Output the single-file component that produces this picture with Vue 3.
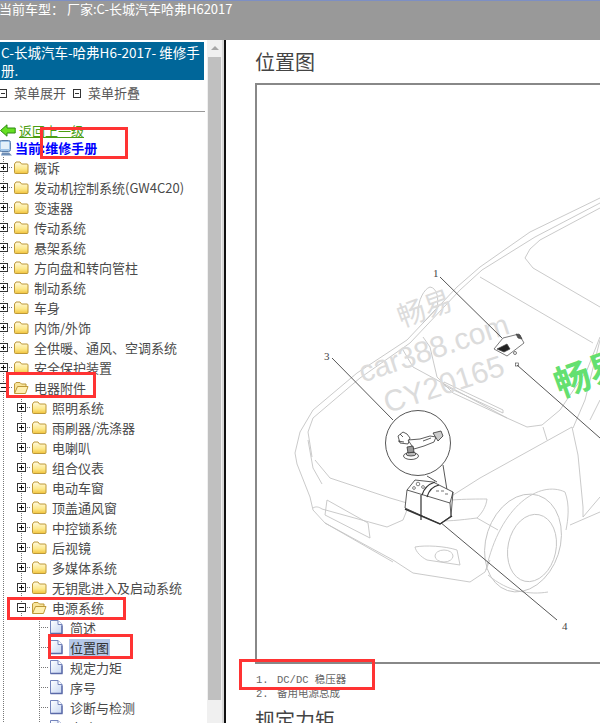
<script setup>
const topItems = [
  '概诉', '发动机控制系统(GW4C20)', '变速器', '传动系统', '悬架系统', '方向盘和转向管柱',
  '制动系统', '车身', '内饰/外饰', '全供暖、通风、空调系统', '安全保护装置',
]
const subItems = [
  '照明系统', '雨刷器/洗涤器', '电喇叭', '组合仪表', '电动车窗', '顶盖通风窗',
  '中控锁系统', '后视镜', '多媒体系统', '无钥匙进入及启动系统',
]
const pages = ['简述', '位置图', '规定力矩', '序号', '诊断与检测', '电路原理']

// guides: one entry per ancestor level, true when the dotted line runs through
const rows = [
  ...topItems.map((label) => ({ label, guides: [], kind: 'closed' })),
  { label: '电器附件', guides: [], kind: 'open' },
  ...subItems.map((label) => ({ label, guides: [true], kind: 'closed' })),
  { label: '电源系统', guides: [true], kind: 'open' },
  ...pages.map((label) => ({ label, guides: [true, false], kind: 'page', selected: label === '位置图' })),
]

const marks = [
  { id: 'dealer', x: 6, y: 372, w: 90, h: 26 },
  { id: 'manual', x: 40, y: 127, w: 88, h: 32 },
  { id: 'power', x: 7, y: 597, w: 119, h: 23 },
  { id: 'location', x: 48, y: 634, w: 85, h: 25 },
  { id: 'regulator', x: 239, y: 659, w: 136, h: 31 },
]
</script>

<template>
  <div class="screen">
    <header class="topbar">当前车型：&nbsp;厂家:C-长城汽车哈弗H62017</header>

    <div class="body">
      <aside class="sidebar">
        <div class="manual-title">C-长城汽车-哈弗H6-2017- 维修手册.</div>

        <div class="menu-tools">
          <span class="tool"><i class="tool-icon"></i>菜单展开</span>
          <span class="tool"><i class="tool-icon"></i>菜单折叠</span>
        </div>

        <div class="back-row">
          <svg class="back-icon" width="16" height="13" viewBox="0 0 16 13">
            <path d="M0.500 6.500 7 0.800v3.200h8.200v5H7v3.200z" fill="#66e022" stroke="#2d8a12" stroke-width="1" />
          </svg>
          <a class="back-link">返回上一级</a>
        </div>

        <div class="current-row">
          <svg class="current-icon" width="14" height="16" viewBox="0 0 14 16">
            <rect x="0.500" y="0.500" width="11" height="11" rx="2" fill="#9fc4e8" stroke="#5c7ea8" />
            <rect x="2" y="2" width="8" height="7" fill="#e4f0fa" />
            <path d="M3 12.500h7l3 3H2z" fill="#6f8fb8" />
          </svg>
          <strong>当前:维修手册</strong>
        </div>

        <ul class="tree">
          <li v-for="row in rows" :key="row.label" class="tree-row">
            <span
              v-for="(line, i) in row.guides"
              :key="i"
              class="guide"
              :class="{ 'guide-line': line }"
            ></span>

            <span class="joint">
              <span v-if="row.kind !== 'page'" class="toggle" :class="{ plus: row.kind === 'closed' }"></span>
            </span>

            <svg v-if="row.kind === 'closed'" class="node-icon" width="16" height="15" viewBox="0 0 16 15">
              <defs>
                <linearGradient id="folderFill" x1="0" y1="0" x2="0" y2="1">
                  <stop offset="0" stop-color="#fffbe0" />
                  <stop offset="0.6" stop-color="#fde88a" />
                  <stop offset="1" stop-color="#f0c23c" />
                </linearGradient>
              </defs>
              <path d="M1.500 4 3 2h4l1.500 2h5.500a1 1 0 0 1 1 1v7.500a1 1 0 0 1-1 1H2.500a1 1 0 0 1-1-1z" fill="url(#folderFill)" stroke="#bd9838" />
            </svg>
            <svg v-else-if="row.kind === 'open'" class="node-icon" width="16" height="15" viewBox="0 0 16 15">
              <path d="M1.500 13V4L3 2.500h4L8.500 4h4.500v2.500" fill="#f8e49a" stroke="#bd9838" />
              <path d="M1.500 13.500 4.500 6.500h10.500l-2.500 7z" fill="#fff0b0" stroke="#bd9838" />
            </svg>
            <svg v-else class="node-icon" width="16" height="16" viewBox="0 0 16 16">
              <defs>
                <linearGradient id="pageFill" x1="0" y1="0" x2="1" y2="1">
                  <stop offset="0" stop-color="#fff" />
                  <stop offset="1" stop-color="#c6d6f2" />
                </linearGradient>
              </defs>
              <path d="M1.500 1.500h7.500l4 4v9h-11.500z" fill="url(#pageFill)" stroke="#7484bc" />
              <path d="M9 1.500v4h4" fill="#fff" stroke="#7484bc" />
              <path d="M1.500 14.500h11.500v-8" fill="none" stroke="#5b6aa8" stroke-width="1.300" />
            </svg>

            <span class="node-label" :class="{ selected: row.selected }">{{ row.label }}</span>
          </li>
        </ul>
      </aside>

      <div class="scrollbar">
        <span class="scroll-arrow"></span>
        <span class="scroll-thumb"></span>
      </div>
      <div class="divider"></div>

      <main class="content">
        <h2 class="heading">位置图</h2>

        <figure class="figure">
          <svg width="400" height="577" viewBox="257 85 400 577">
            <!-- car outline -->
            <g fill="none" stroke="#c4c4c4" stroke-width="0.9">
              <path d="M640 180 600 198 530 232 480 267 457 287 407 340 357 373 313 410 300 432 295 453 297 464 310 497 313 510" />
              <path d="M640 186 600 203 535 237 482 270 460 290 410 343 360 378 313 418 308 432 312 457" />
              <path d="M640 192 600 208 540 240 530 249 525 258 533 268 600 307 640 330" />
              <path d="M480 277 593 343" />
              <path d="M403 350 413 367 507 418 527 427 542 425 560 410 587 370 600 337" />
              <path d="M444 382 503 410 503 413 443 385z" />
              <path d="M423 337 430 347 437 377 453 393 507 418" />
              <path d="M418 313C418 300 424 289 430 287 437 288 439 298 437 308L423 323" />
              <path d="M543 427 547 440" />
              <path d="M572 427 480 478 450 497" />
              <path d="M572 427 578 455 583 507 583 517" />
              <path d="M315 460 330 478 390 498 407 503" />
              <path d="M308 440 313 468 322 484" />
              <path d="M327 500 368 523 370 538 325 515z" />
              <path d="M313 508C316 506 319 507 322 509L387 527 403 520 407 510" />
              <path d="M313 510 325 523 393 560 413 573 470 582 485 572 490 560" />
              <path d="M325 523 393 562" />
              <path d="M415 547C425 545 445 546 457 550L460 565 427 560C421 557 416 552 415 547z" />
              <ellipse cx="444" cy="556" rx="9" ry="6" />
              <path d="M452 500C465 499 478 499 487 499 486 507 482 513 477 518 460 520 445 522 438 520" />
              <path d="M477 518 498 530" />
              <ellipse cx="523" cy="543" rx="37" ry="50" transform="rotate(18 523 543)" />
              <ellipse cx="532" cy="548" rx="24" ry="34" transform="rotate(12 532 548)" />
              <path d="M486 570C500 505 540 480 565 492 570 505 568 520 566 530" />
              <path d="M570 525 600 512 640 495" />
              <path d="M583 517 600 497 640 470" />
              <path d="M548 592C530 595 508 592 488 575" />
              <path d="M600 340 585 400 573 428" />
              <path d="M590 420 600 400 640 390" />
            </g>

            <!-- watermark -->
            <g class="wm">
              <text class="wm-cn" transform="translate(428 318) rotate(-20)" text-anchor="middle">畅易</text>
              <text class="wm-site" transform="translate(437 358) rotate(-18.500)" text-anchor="middle">car388.com</text>
              <text class="wm-code" transform="translate(447 394) rotate(-18)" text-anchor="middle">CY20165</text>
            </g>
            <text class="wm-green" transform="translate(560 398) rotate(-20)">畅易</text>

            <!-- callouts -->
            <g fill="none" stroke="#444" stroke-width="0.9">
              <path d="M440 277 502 338" />
              <path d="M517 365 600 438 640 474" />
              <path d="M332 358 393 420" />
              <path d="M440 522 557 620" />
              <circle cx="418" cy="443" r="32.500" fill="#fff" />
              <path d="M443 465 447 490M427 476 437 482" />
              <rect x="515.500" y="363" width="3" height="3" stroke-width="0.6" />
            </g>

            <!-- part 1, voltage regulator -->
            <g stroke="#444" stroke-width="0.7">
              <path d="M494 349 503 338 519 334 524 343 507 356z" fill="#fff" />
              <path d="M497 349 507 344 510 349 504 352z" fill="#222" />
              <path d="M516 334 520 335 522 339 518 338z" fill="#555" />
              <circle cx="515" cy="353" r="1.500" fill="#fff" />
            </g>

            <!-- part 3, clamp in the circle -->
            <g stroke="#333" stroke-width="0.8" fill="#fff">
              <path d="M398 436 403 432 407 434 410 438 408 444 400 443z" />
              <path d="M408 440 420 439 430 436 436 437 434 442 424 446 414 449z" />
              <path d="M433 433 441 431 443 436 438 441z" fill="#ccc" />
              <ellipse cx="411" cy="456" rx="7.500" ry="3.500" />
              <ellipse cx="411" cy="454" rx="5" ry="2" fill="#bbb" />
              <path d="M407 447 413 446 414 452 408 453z" fill="#999" />
              <path d="M398 441 404 442M400 434 403 437M423 441 431 438" fill="none" />
            </g>

            <!-- part 4, battery -->
            <g stroke="#333" stroke-width="0.8" fill="#fff">
              <path d="M407 490 415 480 433 482 453 492 451 516 440 524 405 508z" />
              <path d="M407 490 450 503 453 492M450 503 451 516" fill="none" />
              <path d="M421 495V520M422 495C424 488 429 484 435 482M427 497C429 490 434 486 439 485" fill="none" stroke-width="1.200" />
              <path d="M405 509 440 524 452 516" fill="none" stroke-width="1.500" />
              <circle cx="418" cy="484" r="1.800" fill="none" stroke-width="0.6" />
              <circle cx="423" cy="487" r="1.400" fill="none" stroke-width="0.6" />
              <circle cx="414" cy="488" r="1.400" fill="none" stroke-width="0.6" />
              <path d="M436 491h3M441 491h3M445 494h3" fill="none" stroke-width="0.7" />
            </g>

            <g class="callout-no">
              <text x="433" y="277">1</text>
              <text x="324" y="360">3</text>
              <text x="562" y="630">4</text>
            </g>
          </svg>
        </figure>

        <ol class="parts">
          <li><span class="part-no">1.</span>DC/DC 稳压器</li>
          <li><span class="part-no">2.</span>备用电源总成</li>
        </ol>

        <h2 class="heading torque">规定力矩</h2>
      </main>
    </div>

    <!-- red annotation boxes drawn over the capture -->
    <span
      v-for="m in marks"
      :key="m.id"
      class="mark"
      :style="{ left: m.x + 'px', top: m.y + 'px', width: m.w + 'px', height: m.h + 'px' }"
    ></span>
  </div>
</template>

<style scoped>
.screen {
  position: relative;
  width: 600px;
  height: 723px;
  overflow: hidden;
  background: #fff;
  font-family: "Noto Sans CJK SC", "Liberation Sans", sans-serif;
  font-size: 13px;
  color: #444;
}

.topbar {
  height: 39px;
  border-top: 1px solid #7d8fc4;
  background: #999;
  margin-left: -1px;
  color: #fff;
  font-size: 13px;
  line-height: 15px;
  white-space: nowrap;
}

.body {
  display: flex;
  height: 683px;
}

.sidebar {
  width: 207px;
  flex: none;
  overflow: hidden;
  padding-top: 2px;
  box-sizing: border-box;
}

.manual-title {
  width: 204px;
  height: 38px;
  box-sizing: border-box;
  padding: 1px 0 0 1px;
  background: #069;
  color: #fff;
  font-size: 13.500px;
  line-height: 18px;
}

.menu-tools {
  display: flex;
  align-items: flex-start;
  gap: 7px;
  width: 206px;
  height: 32px;
  box-sizing: border-box;
  margin-left: -1px;
  padding-top: 4px;
  line-height: 18px;
  border-bottom: 1px solid #999;
}

.tool {
  display: flex;
  align-items: center;
  gap: 7px;
  color: #555;
}

.tool-icon {
  width: 6px;
  height: 7px;
  border: 1px solid #333;
  background: linear-gradient(#333, #333) center / 4px 1px no-repeat;
}

.back-row {
  display: flex;
  align-items: center;
  gap: 3px;
  height: 17px;
  margin-top: 10px;
  line-height: 17px;
}

.back-link {
  color: #4a9e12;
  text-decoration: underline;
}

.current-row {
  display: flex;
  align-items: center;
  gap: 2px;
  height: 18px;
  margin-left: -1px;
  line-height: 18px;
  color: #00f;
}

.current-row strong {
  font-weight: 700;
}

.tree {
  list-style: none;
  margin: 0 0 0 -6px;
  padding: 0;
}

.tree-row {
  display: flex;
  align-items: center;
  height: 20px;
  white-space: nowrap;
}

.guide {
  flex: none;
  width: 18px;
  height: 20px;
}

.guide-line {
  background: repeating-linear-gradient(to bottom, #777 0 1px, transparent 1px 2px) 9px 0 / 1px 100% no-repeat;
}

.joint {
  flex: none;
  position: relative;
  width: 18px;
  height: 20px;
  background:
    repeating-linear-gradient(to bottom, #777 0 1px, transparent 1px 2px) 9px 0 / 1px 100% no-repeat,
    repeating-linear-gradient(to right, #777 0 1px, transparent 1px 2px) 9px 10px / 9px 1px no-repeat;
}

.toggle {
  position: absolute;
  left: 5px;
  top: 6px;
  width: 7px;
  height: 7px;
  border: 1px solid #333;
  background: linear-gradient(#111, #111) center / 5px 1px no-repeat, #fff;
}

.toggle.plus {
  background: linear-gradient(#111, #111) center / 5px 1px no-repeat,
    linear-gradient(#111, #111) center / 1px 5px no-repeat, #fff;
}

.node-icon {
  flex: none;
  margin-left: 1px;
}

.node-label {
  margin-left: 4px;
  padding: 0 1px;
  line-height: 17px;
  color: #4a4a4a;
}

.node-label.selected {
  background: #b5c8e8;
  color: #333;
}

.scrollbar {
  flex: none;
  width: 15px;
  background: #f0f0f0;
  display: flex;
  flex-direction: column;
  align-items: center;
  padding-top: 6px;
  box-sizing: border-box;
}

.scroll-arrow {
  width: 0;
  height: 0;
  border-left: 4px solid transparent;
  border-right: 4px solid transparent;
  border-bottom: 4px solid #a6a6a6;
}

.scroll-thumb {
  width: 13px;
  height: 643px;
  margin-top: 7px;
  background: #c0c0c0;
}

.divider {
  flex: none;
  width: 4px;
  background: linear-gradient(to right, #d8d8d8 0 2px, #111 2px 4px);
}

.content {
  flex: none;
  width: 400px;
  padding: 10px 0 0 29px;
}

.heading {
  margin: 0;
  font-size: 20px;
  font-weight: 400;
  line-height: 24px;
  color: #444;
}

.figure {
  margin: 9px 0 0;
  width: 400px;
  height: 577px;
  border: 2px solid #888;
}

.figure svg {
  display: block;
}

.parts {
  list-style: none;
  margin: 9px 0 0;
  padding: 0 0 0 1px;
  font-family: "Liberation Mono", "Noto Sans CJK SC", monospace;
  font-size: 10.500px;
  line-height: 14px;
  color: #666;
}

.part-no {
  display: inline-block;
  width: 21px;
}

.torque {
  margin-top: 7px;
}

.wm text {
  fill: #dcdcdc;
  font-family: "Liberation Sans", "Noto Sans CJK SC", sans-serif;
}

.wm-cn {
  font-size: 28px;
}

.wm-site {
  font-size: 30px;
}

.wm-code {
  font-size: 30px;
}

.wm-green {
  fill: #64e070;
  font-size: 36px;
  font-weight: 700;
}

.callout-no text {
  fill: #444;
  font-family: "Liberation Serif", serif;
  font-size: 11px;
}

.mark {
  position: absolute;
  box-sizing: border-box;
  border: 3px solid #f33;
}
</style>

<style>
body {
  margin: 0;
}
</style>
